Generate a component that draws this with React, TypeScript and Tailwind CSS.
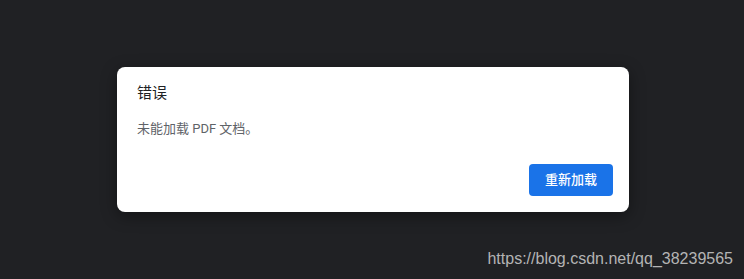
import React from 'react';

export default function App() {
  return (
    <div className="relative flex h-[279px] w-full items-center justify-center bg-[#202124] pl-[2px]">
      {/* Error dialog */}
      <div
        className="flex h-[145px] w-[512px] flex-col rounded-[8px] bg-white shadow-[0_4px_16px_rgba(0,0,0,0.4)]"
        style={{ fontFamily: 'Roboto, "Noto Sans CJK SC", sans-serif' }}
      >
        <div className="px-5 pt-[14px] text-[15px] leading-6 text-[#202124]">错误</div>
        <div className="mt-[14px] px-5 text-[13px] leading-5 text-[#5f6368]">未能加载 PDF 文档。</div>
        <div className="mt-auto flex justify-end px-4 pb-4">
          <button className="h-8 w-[84px] rounded-[4px] bg-[#1a73e8] text-[13px] font-medium text-white">
            重新加载
          </button>
        </div>
      </div>

      {/* watermark */}
      <div
        className="absolute bottom-[10px] right-[11px] text-[16px] leading-5 text-[#b4b4b4]"
        style={{ fontFamily: '"Liberation Sans", Arial, sans-serif' }}
      >
        https://blog.csdn.net/qq_38239565
      </div>
    </div>
  );
}
